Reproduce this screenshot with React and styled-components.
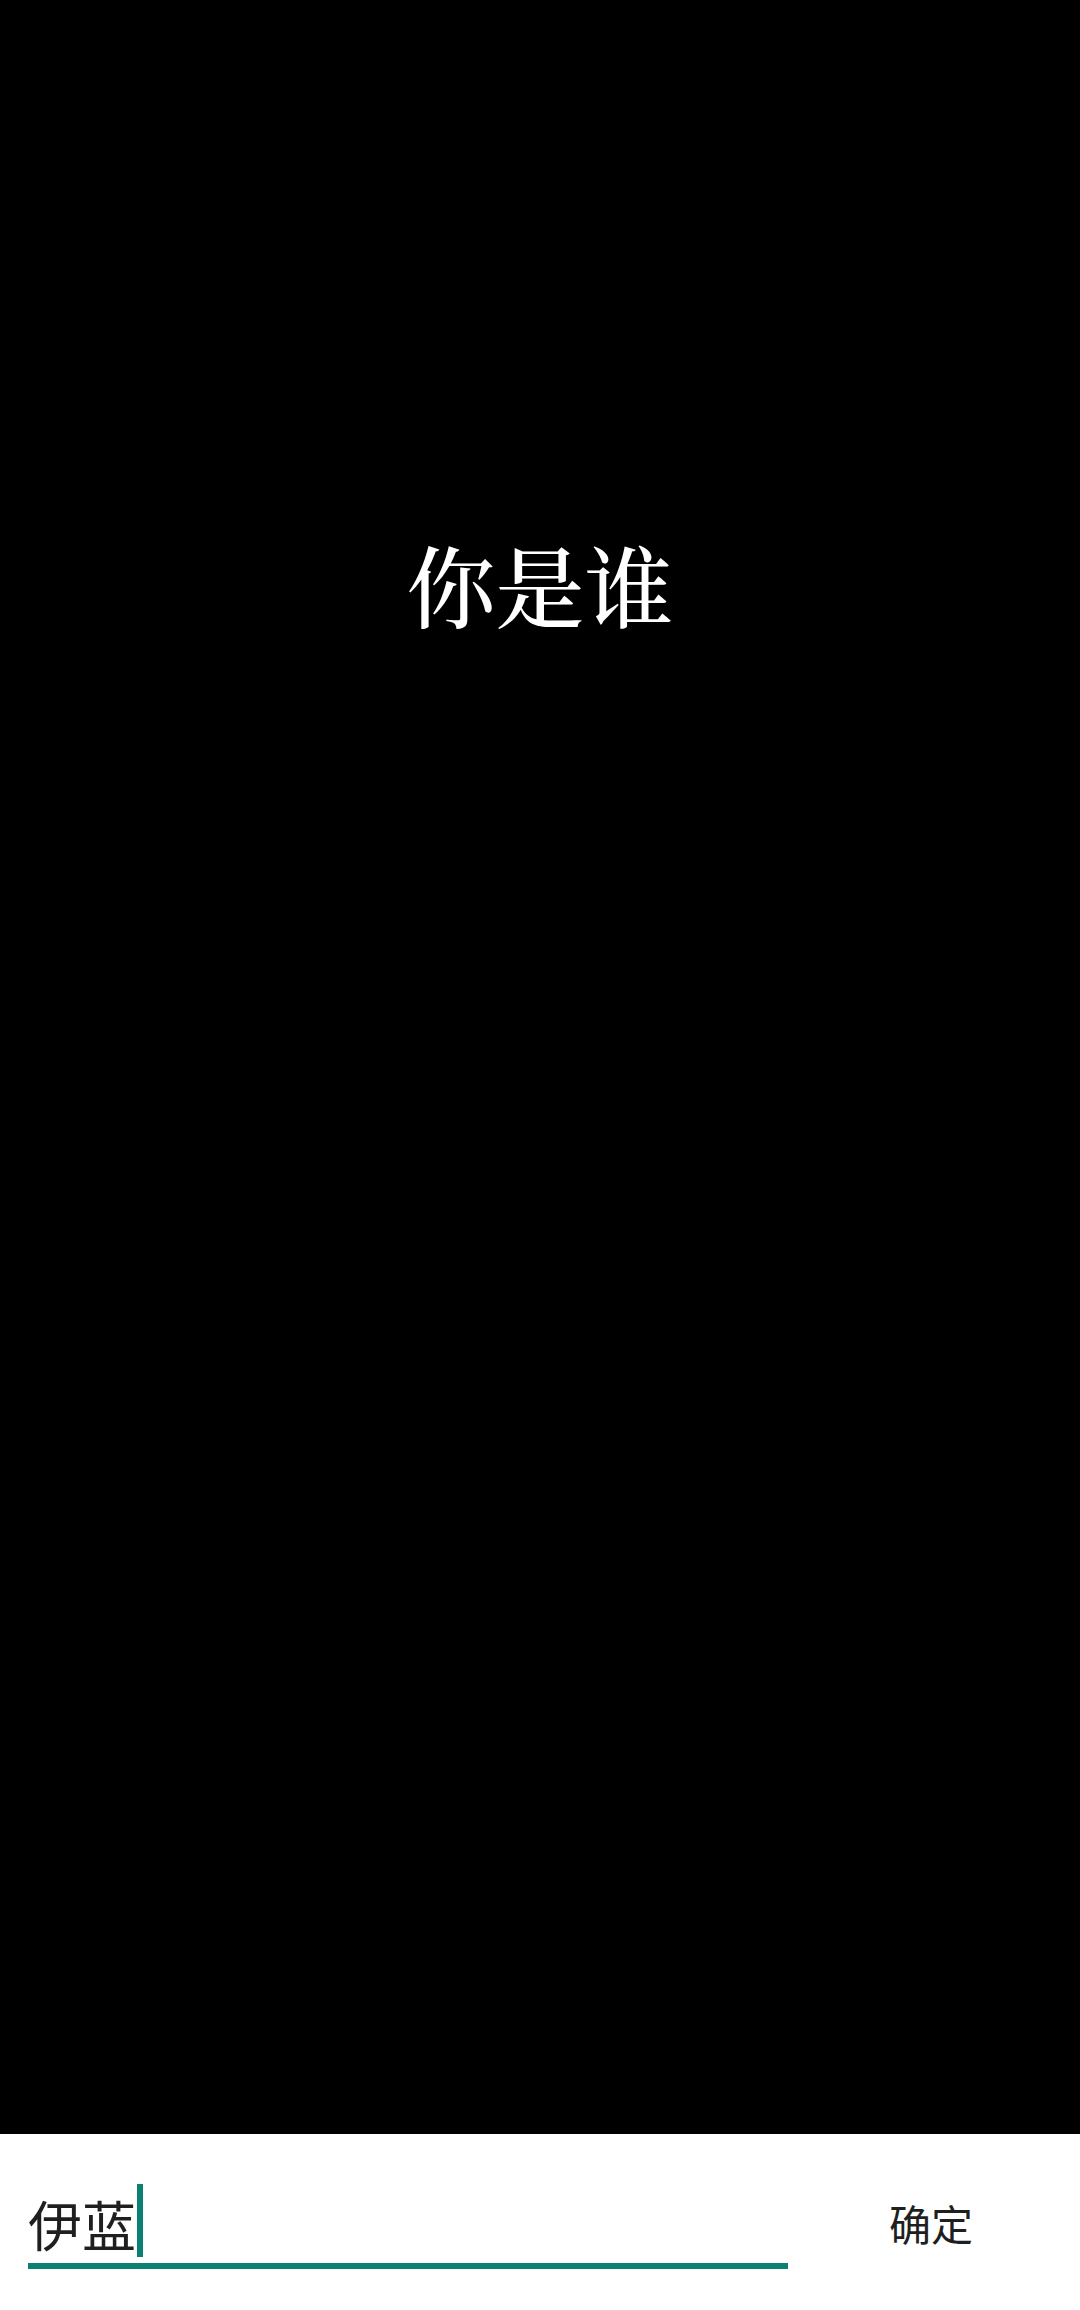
import React from "react";
import styled, { createGlobalStyle } from "styled-components";

const Global = createGlobalStyle`
  html, body { margin: 0; padding: 0; background: #000; }
  #root { width: 1080px; height: 2310px; }
  * { box-sizing: border-box; }
`;

const Screen = styled.div`
  width: 1080px;
  height: 2310px;
  display: flex;
  flex-direction: column;
  background: #000;
`;

const Stage = styled.div`
  flex: 1;
  display: flex;
  flex-direction: column;
  align-items: center;
  padding-top: 538px;
`;

const Title = styled.h1`
  margin: 0;
  color: #fff;
  font-family: "Noto Serif CJK SC", "Noto Serif SC", "Noto Sans CJK SC", serif;
  font-weight: 500;
  font-size: 89px;
  line-height: 89px;
  letter-spacing: 0;
`;

const Bar = styled.div`
  height: 176px;
  background: #fff;
  display: flex;
  align-items: flex-start;
  padding-top: 50px;
`;

const Field = styled.div`
  margin-left: 28px;
  width: 760px;
  height: 85px;
  display: flex;
  align-items: center;
  padding-bottom: 6px;
  border-bottom: 6px solid #0a8172;
`;

const Value = styled.span`
  color: #1f1f1f;
  font-family: "Noto Sans CJK SC", "Noto Sans", sans-serif;
  font-size: 54px;
  line-height: 73px;
  position: relative;
  top: 3px;
`;

const Caret = styled.span`
  display: block;
  width: 6px;
  height: 73px;
  margin-left: 1px;
  background: #0a8172;
`;

const Button = styled.button`
  flex: 1;
  height: 78px;
  padding: 0 6px 0 0;
  border: none;
  background: transparent;
  color: #1f1f1f;
  font-family: "Noto Sans CJK SC", "Noto Sans", sans-serif;
  font-size: 42px;
  line-height: 78px;
  text-align: center;
`;

export default function App() {
  return (
    <>
      <Global />
      <Screen>
        <Stage>
          <Title>你是谁</Title>
        </Stage>
        <Bar>
          <Field>
            <Value>伊蓝</Value>
            <Caret />
          </Field>
          <Button>确定</Button>
        </Bar>
      </Screen>
    </>
  );
}
